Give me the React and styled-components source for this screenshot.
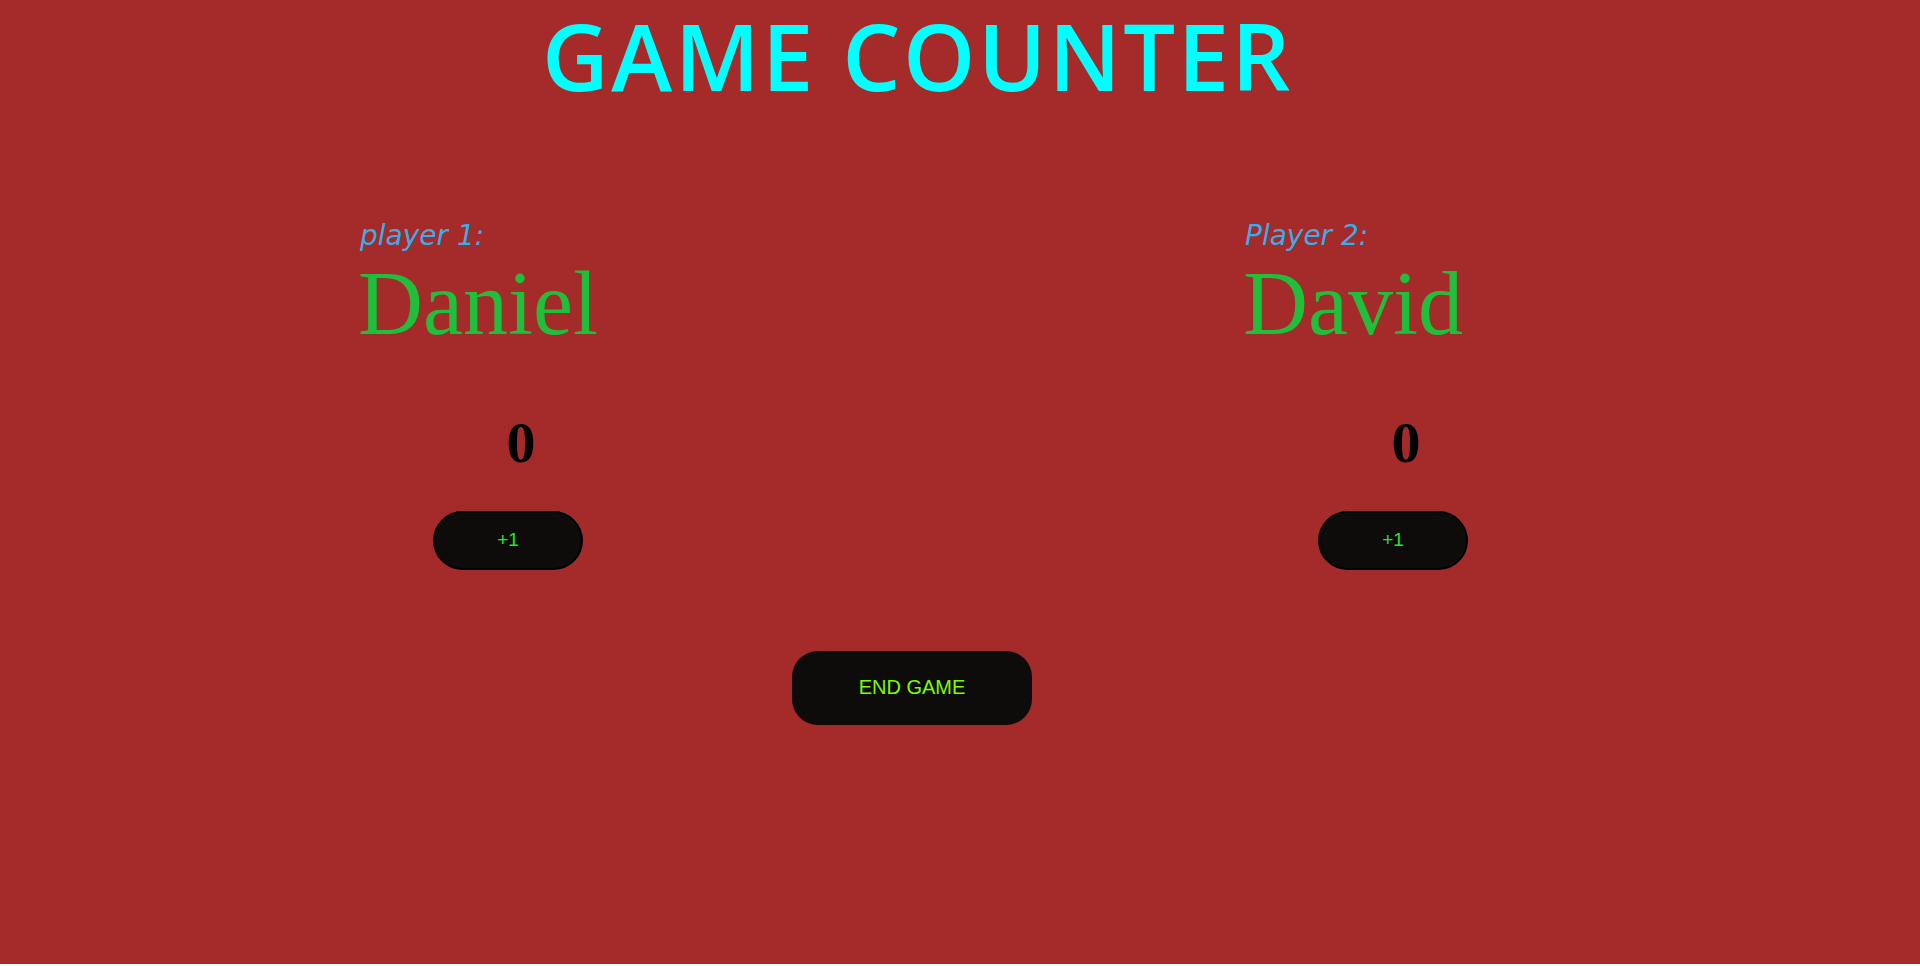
import React, { useState } from "react";
import styled, { createGlobalStyle } from "styled-components";

const Global = createGlobalStyle`
  html, body { margin: 0; padding: 0; background: #ffffff; }
  * { box-sizing: border-box; }
`;

const Page = styled.div`
  background: #a52a2a;
  height: 964px;
  display: flex;
  flex-direction: column;
`;

const Title = styled.h1`
  margin: 1px 0 0;
  padding-right: 85px;
  text-align: center;
  font-family: "Open Sans", "Noto Sans", sans-serif;
  font-weight: 600;
  font-size: 92px;
  letter-spacing: 2.5px;
  line-height: 1.2;
  color: #00ffff;
`;

const Players = styled.div`
  display: flex;
  gap: 585px;
  padding-left: 358px;
  margin-top: 110px;
`;

const Column = styled.section`
  width: 300px;
  display: flex;
  flex-direction: column;
`;

const Label = styled.div`
  font-family: "DejaVu Sans", sans-serif;
  font-style: italic;
  font-size: 28px;
  line-height: 30px;
  color: #3aade6;
  padding-left: 2px;
`;

const Name = styled.div`
  margin-top: 8px;
  font-family: "Liberation Serif", "Times New Roman", serif;
  font-size: 90px;
  line-height: 90px;
  color: #1fbf3c;
  white-space: nowrap;
`;

const Score = styled.div`
  margin-top: 65px;
  padding-left: 26px;
  text-align: center;
  font-family: "Liberation Serif", "Times New Roman", serif;
  font-weight: 700;
  font-size: 58px;
  line-height: 58px;
  color: #000000;
`;

const PlusButton = styled.button`
  align-self: center;
  margin-top: 38.6px;
  width: 150px;
  height: 59px;
  border-radius: 30px;
  border: 2.5px solid #000000;
  background: #0e0b0b;
  color: #22e622;
  font-family: "Liberation Sans", Arial, sans-serif;
  font-size: 19px;
  cursor: pointer;
`;

const Footer = styled.div`
  display: flex;
  justify-content: center;
  padding-right: 96px;
  margin-top: 81px;
`;

const EndButton = styled.button`
  width: 240px;
  height: 74px;
  border-radius: 26px;
  border: none;
  background: #0e0b0b;
  color: #7cfc00;
  font-family: "Liberation Sans", Arial, sans-serif;
  font-size: 20px;
  cursor: pointer;
`;

function Player({ label, name, score, onAdd }) {
  return (
    <Column>
      <Label>{label}</Label>
      <Name>{name}</Name>
      <Score>{score}</Score>
      <PlusButton onClick={onAdd}>+1</PlusButton>
    </Column>
  );
}

export default function App() {
  const [s1, setS1] = useState(0);
  const [s2, setS2] = useState(0);
  return (
    <>
      <Global />
      <Page>
        <Title>GAME COUNTER</Title>
        <Players>
          <Player label="player 1:" name="Daniel" score={s1} onAdd={() => setS1(s1 + 1)} />
          <Player label="Player 2:" name="David" score={s2} onAdd={() => setS2(s2 + 1)} />
        </Players>
        <Footer>
          <EndButton onClick={() => { setS1(0); setS2(0); }}>END GAME</EndButton>
        </Footer>
      </Page>
    </>
  );
}
